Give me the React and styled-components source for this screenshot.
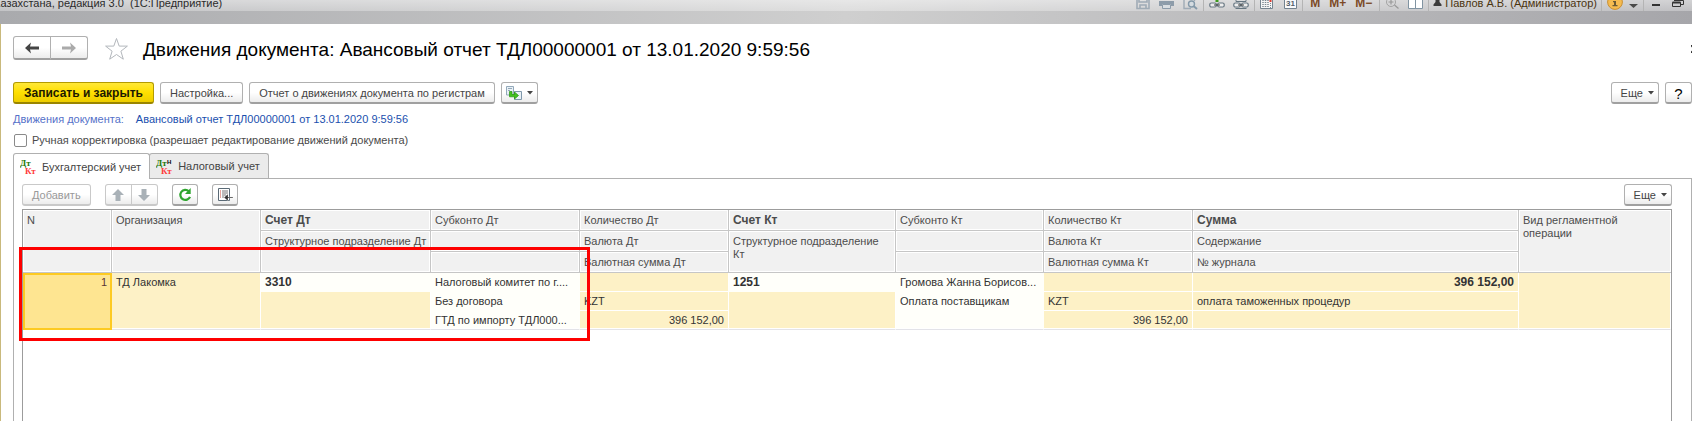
import React from "react";
import styled, { createGlobalStyle, css } from "styled-components";

const GlobalStyle = createGlobalStyle`
  * {
    box-sizing: border-box;
  }
  body {
    margin: 0;
    background: #fff;
    overflow: hidden;
  }
  body, button, input, table {
    font-family: "Liberation Sans", Arial, sans-serif;
    font-size: 11px;
    line-height: 13px;
    color: #444;
  }
`;

const Page = styled.div`
  display: flex;
  flex-direction: column;
  height: 100vh;
`;

const TitleBar = styled.header`
  display: flex;
  justify-content: space-between;
  align-items: flex-end;
  height: 11px;
  overflow: hidden;
  background: linear-gradient(to bottom, rgba(255, 255, 255, 0.5), rgba(255, 255, 255, 0.3)),
    linear-gradient(to right, #a9aaad, #cfcfcf 50%, #a6a6aa);
`;

const AppTitle = styled.span`
  margin-left: -6px;
  line-height: 15px;
  color: #2b2b2b;
  white-space: pre;
`;

const SystemTools = styled.div`
  display: flex;
  align-items: flex-end;
  height: 11px;
`;

const ToolGroup = styled.div`
  display: flex;
  align-items: flex-end;
  gap: ${(p) => p.$gap || 8}px;
  height: 11px;
  padding: 0 ${(p) => p.$pad || 5}px;
  border-left: ${(p) => (p.$first ? "none" : "1px solid #b4b4b4")};
`;

const ToolButton = styled.button`
  display: flex;
  padding: 0;
  border: none;
  background: none;
  font-size: 12px;
  font-weight: bold;
  line-height: 15px;
  color: #7c4a26;
`;

const UserName = styled.span`
  line-height: 15px;
  color: #4a3410;
  white-space: nowrap;
`;

const Strip = styled.div`
  flex: none;
  height: 13px;
  background: linear-gradient(to right, #a9aaad, #cfcfcf 50%, #a6a6aa);
`;

const Form = styled.main`
  flex: 1;
  display: flex;
  flex-direction: column;
  min-height: 0;
  padding: 12px 0 0 12px;
  border-left: 1px solid #c9b97c;
`;

const Heading = styled.div`
  display: flex;
  align-items: center;
  height: 24px;
`;

const Title = styled.h1`
  flex: 1;
  margin: 0 0 0 14px;
  padding-top: 3px;
  font-size: 19px;
  font-weight: normal;
  line-height: 24px;
  color: #000;
`;

const CloseButton = styled.button`
  width: 1px;
  height: 10px;
  padding: 0;
  border: none;
  background: none;
  overflow: hidden;
`;

const buttonLook = css`
  display: flex;
  align-items: center;
  justify-content: center;
  height: ${(p) => p.$height || 22}px;
  padding: 1px ${(p) => p.$pad || 9}px 0;
  border: 1px solid #b0b0b0;
  border-bottom: 2px solid #a0a0a0;
  border-radius: 3px;
  background: linear-gradient(to bottom, #fff 50%, #ececec);
  color: #444;
  white-space: nowrap;
`;

const Button = styled.button`
  ${buttonLook}

  &:disabled {
    border-color: #c9c9c9;
    color: #999;
  }
`;

const PrimaryButton = styled.button`
  ${buttonLook}
  border-color: #b39b00;
  border-bottom-color: #9a8500;
  background: linear-gradient(to bottom, #ffe838, #ffdf00 50%, #edcd00);
  font-size: 12px;
  font-weight: bold;
  color: #1c1900;
`;

const MenuButton = styled(Button)`
  gap: 5px;
  padding-right: 4px;
`;

const HelpButton = styled(Button)`
  width: 27px;
  font-size: 15px;
  color: #000;
`;

const SplitButtons = styled.div`
  display: flex;

  ${Button} {
    width: ${(p) => p.$cell}px;
    padding: 0;
  }
  ${Button}:first-child {
    border-radius: 3px 0 0 3px;
  }
  ${Button}:last-child {
    margin-left: -1px;
    border-radius: 0 3px 3px 0;
  }
`;

const StarButton = styled.button`
  display: flex;
  margin-left: 16px;
  padding: 2px 0 0;
  border: none;
  background: none;
`;

const Commands = styled.div`
  display: flex;
  gap: 6px;
  margin-top: 22px;
`;

const Spacer = styled.span`
  flex: 1;
`;

const LinkRow = styled.div`
  display: flex;
  gap: 12px;
  margin-top: 8px;
  line-height: 14px;
  color: #5571c9;
`;

const DocLink = styled.a`
  color: #1a4fae;
  text-decoration: none;
`;

const CheckRow = styled.label`
  display: flex;
  align-items: center;
  gap: 5px;
  margin-top: 7px;
  height: 14px;
  color: #4a4a4a;
`;

const Checkbox = styled.input`
  appearance: none;
  width: 13px;
  height: 13px;
  margin: 0 0 0 1px;
  border: 1px solid #8a8a8a;
  border-radius: 2px;
  background: #fff;
`;

const Tabs = styled.div`
  display: flex;
  align-items: flex-end;
  margin-top: 6px;
`;

const Tab = styled.button`
  position: relative;
  display: flex;
  align-items: center;
  gap: 6px;
  height: ${(p) => (p.$active ? 26 : 25)}px;
  margin-bottom: ${(p) => (p.$active ? -1 : 0)}px;
  margin-left: ${(p) => (p.$active ? 0 : -1)}px;
  padding: 1px 8px 0 6px;
  border: 1px solid #b0b0b0;
  border-bottom: none;
  border-radius: 3px 3px 0 0;
  background: ${(p) => (p.$active ? "#fff" : "#ebebeb")};
  z-index: ${(p) => (p.$active ? 1 : 0)};
`;

const Panel = styled.section`
  flex: 1;
  display: flex;
  flex-direction: column;
  min-height: 0;
  padding: 5px 19px 0 8px;
  border: 1px solid #b0b0b0;
  border-bottom: none;
`;

const Toolbar = styled.div`
  display: flex;
  gap: 14px;
  padding-bottom: 3px;
`;

const GridFrame = styled.div`
  position: relative;
  flex: 1;
  min-height: 0;
  border: 1px solid #9c9c9c;
  border-bottom: none;
`;

const Table = styled.table`
  width: 100%;
  table-layout: fixed;
  border-collapse: separate;
  border-spacing: 0;
`;

const Row = styled.tr`
  height: ${(p) => p.$height}px;
`;

const HeadCell = styled.th`
  padding: 4px 3px 1px 4px;
  border-right: 1px solid #c6c6c6;
  border-bottom: 1px solid #c6c6c6;
  box-shadow: inset 0 0 0 1px #fff;
  background: #f1f1f1;
  font-size: ${(p) => (p.$strong ? 12 : 11)}px;
  font-weight: ${(p) => (p.$strong ? "bold" : "normal")};
  text-align: left;
  vertical-align: top;
  color: #4c4c4c;

  &:last-child[rowspan] {
    border-right: none;
  }
`;

const Cell = styled.td`
  padding: 3px 4px 2px 4px;
  border-right: 1px solid ${(p) => (p.$plain ? "#fffffa" : "#fff")};
  border-bottom: 1px solid ${(p) => (p.$end ? "#e3e3e8" : p.$plain ? "#fffffa" : "#fff")};
  background: ${(p) => (p.$plain ? "#fffffa" : "#fdf1c6")};
  box-shadow: ${(p) => (p.$end ? "inset 0 -1px 0 #fff" : "none")};
  font-size: ${(p) => (p.$strong ? 12 : 11)}px;
  font-weight: ${(p) => (p.$strong ? "bold" : "normal")};
  text-align: ${(p) => (p.$right ? "right" : "left")};
  vertical-align: top;
  white-space: nowrap;
  overflow: hidden;
  text-overflow: ellipsis;
  color: #333;
`;

const CurrentCell = styled(Cell)`
  padding: 1px 3px 1px 2px;
  border: 2px solid #fdca22;
  background: #fee591;
  box-shadow: none;
  color: #5a3434;
`;

/* highlight frame drawn over the grid */
const Marker = styled.div`
  position: absolute;
  left: -4px;
  top: 37px;
  width: 571px;
  height: 94px;
  border: 3px solid #fe0000;
  pointer-events: none;
`;

const Caret = () => (
  <svg width="6" height="4" viewBox="0 0 6 4">
    <path d="M0 0h6L3 3.5z" fill="#444" />
  </svg>
);

const ArrowIcon = ({ color, flip }) => (
  <svg width="14" height="12" viewBox="0 0 14 12">
    <path
      d="M0 6l6-5.500-1 4h9v3H5l1 4z"
      fill={color}
      transform={flip ? "rotate(180 7 6)" : undefined}
    />
  </svg>
);

const MoveIcon = ({ down }) => (
  <svg width="12" height="12" viewBox="0 0 12 12">
    <path
      d="M6 0l6 6H8.500v6h-5V6H0z"
      fill="#a9b1b7"
      transform={down ? "rotate(180 6 6)" : undefined}
    />
  </svg>
);

const StarIcon = () => (
  <svg width="25" height="24" viewBox="0 0 25 24">
    <path
      d="M12.500 1.500l2.700 7.600h8.200l-6.500 5.100 2.400 8-6.800-4.700-6.800 4.700 2.400-8-6.500-5.100h8.200z"
      fill="#fff"
      stroke="#b3b7bc"
    />
  </svg>
);

const CopyIcon = () => (
  <svg width="16" height="14" viewBox="0 0 16 14">
    <path d="M.5.5h7v8.500h-7z" fill="#eaf1f6" stroke="#93a9ba" />
    <path d="M2 2.500h4M2 4.500h2" stroke="#93a9ba" />
    <path d="M8.500 5.500h7v8h-7z" fill="#eaf1f6" stroke="#7f98ab" />
    <path d="M3.500 5.500h2.500v3H8.500V6l4 3.500-4 3.500v-2.200H3.500z" fill="#43c21f" stroke="#26930f" strokeWidth=".7" />
  </svg>
);

const RefreshIcon = () => (
  <svg width="14" height="14" viewBox="0 0 14 14">
    <path d="M10.800 3.300A5 5 0 1 0 12 8.800" fill="none" stroke="#2ea52e" strokeWidth="2.200" />
    <path d="M12.700 0v6H7z" fill="#2ea52e" />
  </svg>
);

const ListIcon = () => (
  <svg width="16" height="14" viewBox="0 0 16 14">
    <path d="M1.500.5h11v12h-11z" fill="#fff" stroke="#5a6a76" />
    <path d="M5 3h6M5 5h6M5 7h4M5 9h2" stroke="#777" />
    <path d="M3 3h1M3 5h1M3 7h1M3 9h1" stroke="#d04a3a" />
    <path d="M7 9.500l4-3.500v3h5v1h-5v3z" fill="#333" stroke="#fff" strokeWidth=".3" />
  </svg>
);

const DtKtIcon = ({ tax }) => (
  <svg width="16" height="16" viewBox="0 0 16 16" fontFamily="Liberation Serif, serif" fontWeight="bold">
    <text x="0" y="7" fontSize="9" fill="#1f7a0a">Дт</text>
    <text x="5" y="15" fontSize="9" fill="#ff3b3b">Кт</text>
    {tax && (
      <text x="11" y="5" fontSize="6" fill="#000" fontFamily="Liberation Sans, sans-serif">Н</text>
    )}
  </svg>
);

const SaveIcon = () => (
  <svg width="14" height="11" viewBox="0 0 14 11">
    <path d="M1 0v8.500h12V0M3 0v2h8V0M4 8.500V5h6v3.500" fill="none" stroke="#9fabb6" strokeWidth="1.600" />
  </svg>
);

const PrintIcon = () => (
  <svg width="15" height="11" viewBox="0 0 15 11">
    <path d="M0 1h15v5h-3V4H3v2H0z" fill="#8d9caa" />
    <path d="M3.500 4.500h8v4h-8z" fill="#d9dee2" stroke="#8d9caa" />
  </svg>
);

const PreviewIcon = () => (
  <svg width="15" height="11" viewBox="0 0 15 11">
    <path d="M1 0v8.500h7M11.500 0v1" fill="none" stroke="#9fabb6" strokeWidth="1.400" />
    <circle cx="8.500" cy="4" r="3" fill="#d5dce1" stroke="#8499a9" strokeWidth="1.400" />
    <path d="M10.500 6l3.500 3" stroke="#8499a9" strokeWidth="2" />
  </svg>
);

const ChainIcon = ({ double }) => (
  <svg width="16" height="11" viewBox="0 0 16 11">
    <rect x=".8" y="3" width="6.500" height="4" rx="1.500" fill="#eee" stroke="#667681" strokeWidth="1.200" />
    <rect x="8.700" y="3" width="6.500" height="4" rx="1.500" fill="#eee" stroke="#667681" strokeWidth="1.200" />
    <path d="M5 5h6" stroke="#444" />
    {double ? (
      <path d="M3 0v1.500h10V0M2.500 8.500h11" fill="none" stroke="#667681" />
    ) : (
      <path d="M8 0v2" stroke="#3d9a1d" strokeWidth="3" />
    )}
  </svg>
);

const CalcIcon = () => (
  <svg width="13" height="11" viewBox="0 0 13 11">
    <path d="M.5-1v9.500h12V-1" fill="#f4f5f6" stroke="#74838f" />
    <path d="M3 0v8M5.500 0v8M8 0v8" stroke="#7b8790" strokeDasharray="1 1" strokeWidth="1.500" />
    <path d="M10.500 3v5" stroke="#7b8790" strokeDasharray="1 1" />
    <path d="M10.500 0v2" stroke="#e0392c" strokeWidth="2" />
  </svg>
);

const CalendarIcon = () => (
  <svg width="13" height="11" viewBox="0 0 13 11">
    <path d="M.5-1v9.500h12V-1" fill="#fafbfc" stroke="#74838f" />
    <text x="2" y="6" fontSize="8" fill="#53606b" fontFamily="Liberation Sans, sans-serif">31</text>
  </svg>
);

const ZoomIcon = () => (
  <svg width="14" height="11" viewBox="0 0 14 11">
    <circle cx="6" cy="2" r="4.500" fill="none" stroke="#a3a3a3" />
    <path d="M3.500 2h5M6 0v4.500M9.500 5l4 3.500" stroke="#989898" strokeWidth="1.200" />
  </svg>
);

const PanelsIcon = () => (
  <svg width="15" height="11" viewBox="0 0 15 11">
    <path d="M.5-1v9.500h14V-1M7.500 0v8" fill="#fff" stroke="#8194a2" />
  </svg>
);

const UserIcon = () => (
  <svg width="9" height="11" viewBox="0 0 9 11">
    <path d="M2.500 0h4v2l2 2.500V6h-8V4.500l2-2.500z" fill="#3c3c3c" />
  </svg>
);

const InfoIcon = () => (
  <svg width="16" height="11" viewBox="0 0 16 11">
    <circle cx="8" cy="2" r="7.400" fill="#f5bb50" stroke="#c98f33" />
    <path d="M6 1h3v4h1.500v1.200h-5V5H7V2.200H6z" fill="#6b5a35" />
  </svg>
);

const MenuIcon = () => (
  <svg width="9" height="11" viewBox="0 0 9 11">
    <path d="M0 4h9L4.500 8z" fill="#4a4a4a" />
  </svg>
);

const MinimizeIcon = () => (
  <svg width="8" height="11" viewBox="0 0 8 11">
    <path d="M0 5h8" stroke="#333" strokeWidth="2" />
  </svg>
);

const RestoreIcon = () => (
  <svg width="12" height="11" viewBox="0 0 12 11">
    <path d="M2 .5h9.500v4H9M.5 2.500h8v4h-8z" fill="none" stroke="#333" />
    <path d="M.5 2.500h8" stroke="#333" strokeWidth="2" />
  </svg>
);

const CloseIcon = () => (
  <svg width="8" height="8" viewBox="0 0 8 8">
    <path d="M0 0l8 8M8 0L0 8" stroke="#333" strokeWidth="2" />
  </svg>
);

const columnWidths = [89, 149, 170, 149, 149, 167, 148, 149, 326];

export default function App() {
  return (
    <Page>
      <GlobalStyle />
      <TitleBar>
        <AppTitle>Казахстана, редакция 3.0  (1С:Предприятие)</AppTitle>
        <SystemTools>
          <ToolGroup $first $pad={5} $gap={9}>
            <ToolButton aria-label="Сохранить"><SaveIcon /></ToolButton>
            <ToolButton aria-label="Печать"><PrintIcon /></ToolButton>
            <ToolButton aria-label="Просмотр"><PreviewIcon /></ToolButton>
          </ToolGroup>
          <ToolGroup>
            <ToolButton aria-label="Получить ссылку"><ChainIcon /></ToolButton>
            <ToolButton aria-label="Перейти по ссылке"><ChainIcon double /></ToolButton>
          </ToolGroup>
          <ToolGroup $gap={11}>
            <ToolButton aria-label="Калькулятор"><CalcIcon /></ToolButton>
            <ToolButton aria-label="Календарь"><CalendarIcon /></ToolButton>
          </ToolGroup>
          <ToolGroup $gap={9} $pad={7}>
            <ToolButton>M</ToolButton>
            <ToolButton>M+</ToolButton>
            <ToolButton>M−</ToolButton>
          </ToolGroup>
          <ToolGroup $gap={9}>
            <ToolButton aria-label="Масштаб"><ZoomIcon /></ToolButton>
            <ToolButton aria-label="Панели"><PanelsIcon /></ToolButton>
          </ToolGroup>
          <ToolGroup $gap={3} $pad={4}>
            <UserIcon />
            <UserName>Павлов А.В. (Администратор)</UserName>
          </ToolGroup>
          <ToolGroup $gap={6}>
            <ToolButton aria-label="Информация"><InfoIcon /></ToolButton>
            <ToolButton aria-label="Меню"><MenuIcon /></ToolButton>
          </ToolGroup>
          <ToolGroup $gap={12} $pad={8}>
            <ToolButton aria-label="Свернуть"><MinimizeIcon /></ToolButton>
            <ToolButton aria-label="Развернуть"><RestoreIcon /></ToolButton>
          </ToolGroup>
        </SystemTools>
      </TitleBar>
      <Strip />

      <Form>
        <Heading>
          <SplitButtons $cell={38}>
            <Button $height={24} aria-label="Назад"><ArrowIcon color="#444" /></Button>
            <Button $height={24} aria-label="Вперед"><ArrowIcon color="#aaa" flip /></Button>
          </SplitButtons>
          <StarButton aria-label="В избранное"><StarIcon /></StarButton>
          <Title>Движения документа: Авансовый отчет ТДЛ00000001 от 13.01.2020 9:59:56</Title>
          <CloseButton aria-label="Закрыть"><CloseIcon /></CloseButton>
        </Heading>

        <Commands>
          <PrimaryButton $pad={10}>Записать и закрыть</PrimaryButton>
          <Button>Настройка...</Button>
          <Button>Отчет о движениях документа по регистрам</Button>
          <MenuButton $pad={4} aria-label="Создать на основании">
            <CopyIcon />
            <Caret />
          </MenuButton>
          <Spacer />
          <MenuButton>Еще <Caret /></MenuButton>
          <HelpButton>?</HelpButton>
        </Commands>

        <LinkRow>
          <span>Движения документа:</span>
          <DocLink href="#doc">Авансовый отчет ТДЛ00000001 от 13.01.2020 9:59:56</DocLink>
        </LinkRow>
        <CheckRow>
          <Checkbox type="checkbox" />
          Ручная корректировка (разрешает редактирование движений документа)
        </CheckRow>

        <Tabs role="tablist">
          <Tab $active role="tab" aria-selected="true"><DtKtIcon />Бухгалтерский учет</Tab>
          <Tab role="tab" aria-selected="false"><DtKtIcon tax />Налоговый учет</Tab>
        </Tabs>

        <Panel>
          <Toolbar>
            <Button disabled>Добавить</Button>
            <SplitButtons $cell={27}>
              <Button disabled aria-label="Вверх"><MoveIcon /></Button>
              <Button disabled aria-label="Вниз"><MoveIcon down /></Button>
            </SplitButtons>
            <Button $pad={5} aria-label="Обновить"><RefreshIcon /></Button>
            <Button $pad={4} aria-label="Показать список"><ListIcon /></Button>
            <Spacer />
            <MenuButton>Еще <Caret /></MenuButton>
          </Toolbar>

          <GridFrame>
            <Table>
              <colgroup>
                {columnWidths.map((w, i) => (
                  <col key={i} width={w} />
                ))}
                <col />
              </colgroup>
              <thead>
                <Row $height={21}>
                  <HeadCell rowSpan={3}>N</HeadCell>
                  <HeadCell rowSpan={3}>Организация</HeadCell>
                  <HeadCell $strong>Счет Дт</HeadCell>
                  <HeadCell>Субконто Дт</HeadCell>
                  <HeadCell>Количество Дт</HeadCell>
                  <HeadCell $strong>Счет Кт</HeadCell>
                  <HeadCell>Субконто Кт</HeadCell>
                  <HeadCell>Количество Кт</HeadCell>
                  <HeadCell $strong>Сумма</HeadCell>
                  <HeadCell rowSpan={3}>Вид регламентной<br />операции</HeadCell>
                </Row>
                <Row $height={21}>
                  <HeadCell rowSpan={2}>Структурное подразделение Дт</HeadCell>
                  <HeadCell />
                  <HeadCell>Валюта Дт</HeadCell>
                  <HeadCell rowSpan={2}>Структурное подразделение Кт</HeadCell>
                  <HeadCell />
                  <HeadCell>Валюта Кт</HeadCell>
                  <HeadCell>Содержание</HeadCell>
                </Row>
                <Row $height={21}>
                  <HeadCell />
                  <HeadCell>Валютная сумма Дт</HeadCell>
                  <HeadCell />
                  <HeadCell>Валютная сумма Кт</HeadCell>
                  <HeadCell>№ журнала</HeadCell>
                </Row>
              </thead>
              <tbody>
                <Row $height={19}>
                  <CurrentCell rowSpan={3} $right>1</CurrentCell>
                  <Cell rowSpan={3} $end>ТД Лакомка</Cell>
                  <Cell $plain $strong>3310</Cell>
                  <Cell $plain>Налоговый комитет по г....</Cell>
                  <Cell />
                  <Cell $plain $strong>1251</Cell>
                  <Cell $plain>Громова Жанна Борисов...</Cell>
                  <Cell />
                  <Cell $strong $right>396 152,00</Cell>
                  <Cell rowSpan={3} $end />
                </Row>
                <Row $height={19}>
                  <Cell rowSpan={2} $end />
                  <Cell $plain>Без договора</Cell>
                  <Cell>KZT</Cell>
                  <Cell rowSpan={2} $end />
                  <Cell $plain>Оплата поставщикам</Cell>
                  <Cell>KZT</Cell>
                  <Cell>оплата таможенных процедур</Cell>
                </Row>
                <Row $height={19}>
                  <Cell $plain $end>ГТД по импорту ТДЛ000...</Cell>
                  <Cell $end $right>396 152,00</Cell>
                  <Cell $plain $end />
                  <Cell $end $right>396 152,00</Cell>
                  <Cell $end />
                </Row>
              </tbody>
            </Table>
            <Marker />
          </GridFrame>
        </Panel>
      </Form>
    </Page>
  );
}
